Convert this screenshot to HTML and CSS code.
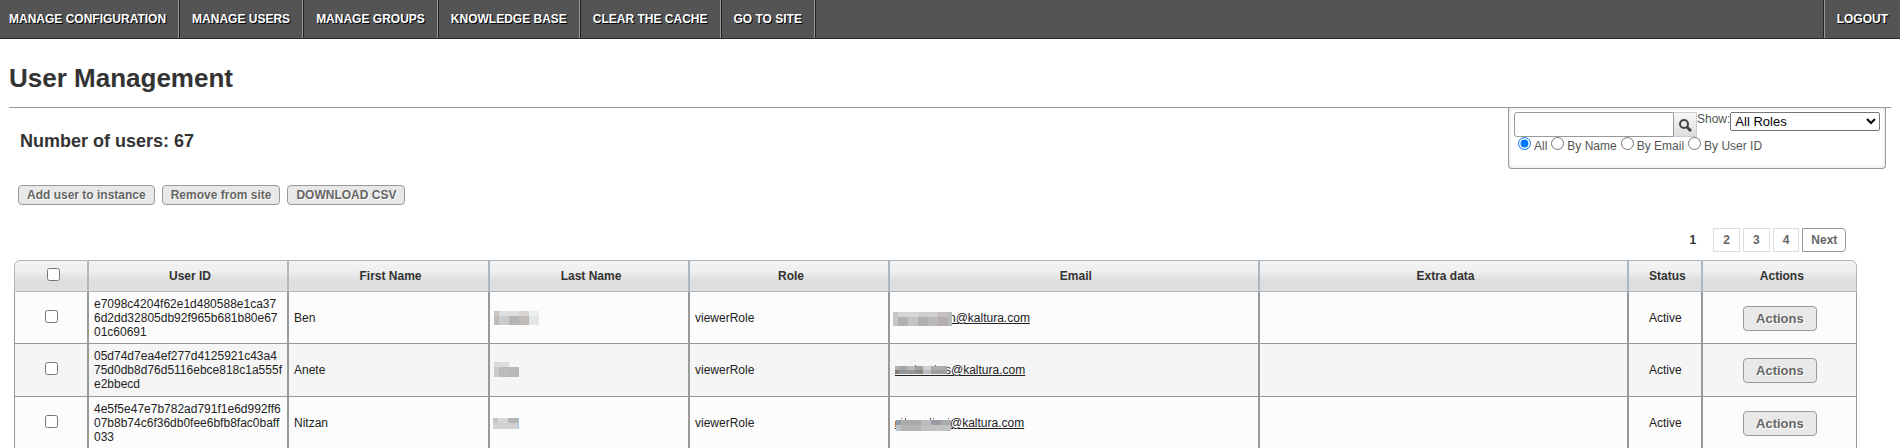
FILE: index.html
```html
<!DOCTYPE html>
<html lang="en">
<head>
    <meta charset="UTF-8">
    <meta name="viewport" content="width=device-width, initial-scale=1.0">
    <title>User Management</title>
    <link rel="stylesheet" href="styles.css">
</head>
<body>
    <nav class="navbar">
        <a href="#">Manage Configuration</a>
        <a href="#">Manage Users</a>
        <a href="#">Manage Groups</a>
        <a href="#">Knowledge Base</a>
        <a href="#">Clear the Cache</a>
        <a href="#">Go to Site</a>
        <a href="#" class="logout">Logout</a>
    </nav>

    <main class="content">
        <h1>User Management</h1>

        <div class="top">
            <div class="summary">
                <h2>Number of users: 67</h2>
                <div class="toolbar">
                    <button type="button" class="button">Add user to instance</button>
                    <button type="button" class="button">Remove from site</button>
                    <button type="button" class="button">DOWNLOAD CSV</button>
                </div>
            </div>

            <form class="search-box" action="#">
                <div class="search-row">
                    <input type="text" class="search-input" name="q" aria-label="Search users">
                    <button type="submit" class="search-btn" aria-label="Search">
                        <svg width="13" height="13" viewBox="0 0 13 13" fill="none" stroke="#444">
                            <circle cx="5" cy="5" r="4" stroke-width="2"/>
                            <path d="M8 8 L12 12" stroke-width="3"/>
                        </svg>
                    </button>
                    <label for="role">Show:</label>
                    <select id="role" name="role">
                        <option>All Roles</option>
                        <option>viewerRole</option>
                    </select>
                </div>
                <div class="filter-row">
                    <input type="radio" name="by" id="byAll" checked><label for="byAll">All</label>
                    <input type="radio" name="by" id="byName"><label for="byName">By Name</label>
                    <input type="radio" name="by" id="byEmail"><label for="byEmail">By Email</label>
                    <input type="radio" name="by" id="byId"><label for="byId">By User ID</label>
                </div>
            </form>
        </div>

        <div class="list">
            <div class="pagination">
                <span class="current">1</span>
                <a href="#">2</a>
                <a href="#">3</a>
                <a href="#">4</a>
                <a href="#" class="next">Next</a>
            </div>

            <table class="users">
                <colgroup>
                    <col class="col-check">
                    <col class="col-id">
                    <col class="col-first">
                    <col class="col-last">
                    <col class="col-role">
                    <col>
                    <col>
                    <col class="col-status">
                    <col class="col-actions">
                </colgroup>
                <thead>
                    <tr>
                        <th><input type="checkbox" aria-label="Select all users"></th>
                        <th>User ID</th>
                        <th>First Name</th>
                        <th>Last Name</th>
                        <th>Role</th>
                        <th>Email</th>
                        <th>Extra data</th>
                        <th>Status</th>
                        <th>Actions</th>
                    </tr>
                </thead>
                <tbody>
                    <tr>
                        <td class="center"><input type="checkbox" aria-label="Select Ben"></td>
                        <td class="id">e7098c4204f62e1d480588e1ca376d2dd32805db92f965b681b80e6701c60691</td>
                        <td>Ben</td>
                        <td>
                            <svg class="hidden-text" width="46" height="14" shape-rendering="crispEdges">
                                <path fill="#c9c4c0" d="M-1 0h5v5h-5z"/><path fill="#dcdee0" d="M4 0h20v5h-20z"/>
                                <path fill="#d9d4d4" d="M24 0h10v5h-10z"/><path fill="#ebeff0" d="M34 0h10v5h-10z"/>
                                <path fill="#c1bbb7" d="M-1 5h5v9h-5z"/><path fill="#cbccce" d="M4 5h10v9h-10z"/>
                                <path fill="#b4b5b5" d="M14 5h10v9h-10z"/><path fill="#c0bab8" d="M24 5h10v9h-10z"/>
                                <path fill="#e3e7e8" d="M34 5h10v9h-10z"/>
                            </svg>
                        </td>
                        <td>viewerRole</td>
                        <td>
                            <a href="#"><svg class="hidden-text" width="54" height="14" shape-rendering="crispEdges">
                                <path fill="#c9c5c3" d="M-2 1h5v14h-5z"/><path fill="#d4d5d6" d="M3 1h20v5h-20z"/>
                                <path fill="#cecece" d="M23 1h20v5h-20z"/><path fill="#c4c0c0" d="M43 1h10v5h-10z"/>
                                <path fill="#b0b2b3" d="M3 6h10v9h-10z"/><path fill="#c5c5c6" d="M13 6h10v9h-10z"/>
                                <path fill="#b0b0b1" d="M23 6h10v9h-10z"/><path fill="#b9babb" d="M33 6h10v9h-10z"/>
                                <path fill="#b4aeae" d="M43 6h10v9h-10z"/><path fill="#b6bbbc" d="M53 1h4v14h-4z"/>
                            </svg>n@kaltura.com</a>
                        </td>
                        <td></td>
                        <td class="center">Active</td>
                        <td class="center"><button type="button" class="button action">Actions</button></td>
                    </tr>
                    <tr>
                        <td class="center"><input type="checkbox" aria-label="Select Anete"></td>
                        <td class="id">05d74d7ea4ef277d4125921c43a475d0db8d76d5116ebce818c1a555fe2bbecd</td>
                        <td>Anete</td>
                        <td>
                            <svg class="hidden-text" width="46" height="14" shape-rendering="crispEdges">
                                <path fill="#dcd9d7" d="M-1 -1h5v5h-5z"/><path fill="#dedee0" d="M4 -1h10v5h-10z"/>
                                <path fill="#cbcbcb" d="M-1 4h5v10h-5z"/><path fill="#bdbbb9" d="M4 4h10v10h-10z"/>
                                <path fill="#b7b9bb" d="M14 4h10v10h-10z"/>
                            </svg>
                        </td>
                        <td>viewerRole</td>
                        <td>
                            <a href="#"><svg class="hidden-text" width="50" height="14" shape-rendering="crispEdges">
                                <path fill="#b9b5aa" d="M0 3h4v4h-4z"/><path fill="#a5a4a9" d="M4 3h8v4h-8z"/>
                                <path fill="#b7babd" d="M12 3h8v4h-8z"/><path fill="#a49f9c" d="M20 3h8v4h-8z"/>
                                <path fill="#cfcfd5" d="M28 3h8v4h-8z"/><path fill="#aeabaa" d="M36 3h16v4h-16z"/>
                                <path fill="#857c78" d="M0 7h4v4h-4z"/><path fill="#959698" d="M4 7h16v4h-16z"/>
                                <path fill="#8b8886" d="M20 7h8v4h-8z"/><path fill="#bcbcc0" d="M28 7h8v4h-8z"/>
                                <path fill="#9d9c9f" d="M36 7h16v4h-16z"/><path fill="#222" d="M0 12h52v1h-52z"/>
                                <path fill="#456" d="M20 2h1v1h-1zM40 2h1v1h-1z"/>
                            </svg>s@kaltura.com</a>
                        </td>
                        <td></td>
                        <td class="center">Active</td>
                        <td class="center"><button type="button" class="button action">Actions</button></td>
                    </tr>
                    <tr>
                        <td class="center"><input type="checkbox" aria-label="Select Nitzan"></td>
                        <td class="id">4e5f5e47e7b782ad791f1e6d992ff607b8b74c6f36db0fee6bfb8fac0baff033</td>
                        <td>Nitzan</td>
                        <td>
                            <svg class="hidden-text" width="46" height="14" shape-rendering="crispEdges">
                                <path fill="#c6c6c6" d="M-2 2h5v5h-5z"/><path fill="#d9d8d8" d="M3 2h10v5h-10z"/>
                                <path fill="#b9b5b3" d="M13 2h10v5h-10z"/><path fill="#d2d0d1" d="M-2 7h25v6h-25z"/>
                                <path fill="#99c8f5" d="M23 2h1v11h-1z"/>
                            </svg>
                        </td>
                        <td>viewerRole</td>
                        <td>
                            <a href="#"><svg class="hidden-text" width="55" height="14" shape-rendering="crispEdges">
                                <path fill="#222" d="M0 12h55v1h-55z"/>
                                <path fill="#b47a3c" d="M0 5h1v6h-1z"/>
                                <path fill="#555" d="M6 2h1v1h-1zM10 2h1v2h-1zM35 2h1v2h-1zM38 2h1v1h-1zM53 2h1v1h-1z"/>
                                <path fill="#8e9bab" d="M1 4h5v5h-5z"/><path fill="#a9a9a6" d="M6 4h20v5h-20z"/>
                                <path fill="#bcbcbc" d="M26 4h10v5h-10z"/><path fill="#9c9ba5" d="M36 4h10v5h-10z"/>
                                <path fill="#aaaaa9" d="M46 4h10v5h-10z"/><path fill="#bcc0c4" d="M1 9h5v6h-5z"/>
                                <path fill="#b4b2b0" d="M6 9h20v6h-20z"/><path fill="#c0c0c1" d="M26 9h30v6h-30z"/>
                            </svg>@kaltura.com</a>
                        </td>
                        <td></td>
                        <td class="center">Active</td>
                        <td class="center"><button type="button" class="button action">Actions</button></td>
                    </tr>
                </tbody>
            </table>
        </div>
    </main>
</body>
</html>
```
FILE: styles.css
```css
body {
    font-family: Arial, "Liberation Sans", sans-serif;
    font-size: 12px;
    line-height: 14px;
    margin: 0;
    background: #fff;
    color: #222;
}

.navbar {
    display: flex;
    background: #545454;
    border-bottom: 1px solid #2d2829;
}

.navbar a {
    padding: 12px;
    border-left: 1px solid #222;
    border-right: 1px solid #999;
    color: #fff;
    font-weight: bold;
    text-transform: uppercase;
    text-decoration: none;
    text-shadow: 1px 1px 0 #000;
}

.navbar a:first-child {
    padding-left: 9px;
    border-left: none;
}

.navbar a:nth-last-child(2) {
    box-shadow: 1px 0 0 #222;
}

.navbar .logout {
    margin-left: auto;
    border-left: 1px solid #999;
    border-right: none;
    box-shadow: -1px 0 0 #222;
}

.content {
    padding: 0 9px;
}

h1 {
    margin: 0;
    padding: 24px 0 14px;
    font-size: 26px;
    line-height: 30px;
    color: #333;
    border-bottom: 1px solid #999;
}

.top {
    display: flex;
    justify-content: space-between;
    align-items: flex-start;
}

.summary {
    padding: 23px 0 0 9px;
}

h2 {
    margin: 0 0 34px 2px;
    font-size: 18px;
    line-height: 20px;
    color: #333;
}

.toolbar {
    display: flex;
    gap: 7px;
}

.button {
    height: 20px;
    padding: 0 8px;
    font: bold 12px Arial, "Liberation Sans", sans-serif;
    color: #666;
    text-shadow: 1px 1px 0 #fff;
    background: #e8e8e8;
    border: 1px solid #999;
    border-radius: 4px;
    cursor: pointer;
}

.button:hover {
    background: #ddd;
}

.button.action {
    height: 25px;
    padding: 0 12px;
    font-size: 13px;
}

.search-box {
    box-sizing: border-box;
    width: 378px;
    height: 61px;
    margin-right: 5px;
    padding: 4px 5px;
    color: #555;
    border: 1px solid #999;
    border-top: none;
    border-radius: 0 0 4px 4px;
    box-shadow: inset 0 0 4px #ddd;
}

.search-row {
    display: flex;
    align-items: flex-start;
}

.search-input {
    box-sizing: border-box;
    width: 160px;
    height: 25px;
    border: 1px solid #999;
    border-radius: 3px 0 0 3px;
}

.search-btn {
    display: flex;
    align-items: center;
    justify-content: center;
    width: 23px;
    height: 25px;
    padding: 2px 0 0;
    background: linear-gradient(#f8f8f8, #ddd);
    border: 1px solid #ccc;
    border-left: none;
}

select {
    flex: 1;
    height: 19px;
    font: 13px Arial, "Liberation Sans", sans-serif;
}

.filter-row {
    display: flex;
    align-items: flex-start;
}

.filter-row input {
    width: 13px;
    height: 13px;
    margin: 0 3px 0 4px;
}

.filter-row label {
    padding-top: 2px;
}

.list {
    width: calc(98% - 1px);
    margin-left: 5px;
}

.pagination {
    display: flex;
    justify-content: flex-end;
    gap: 3px;
    padding: 23px 11px 8px 0;
    font-weight: bold;
}

.pagination a,
.pagination .current {
    padding: 4px 9px;
    color: #666;
    text-decoration: none;
    border: 1px solid #ddd;
}

.pagination .current {
    margin-right: 4px;
    color: #333;
    border-color: transparent;
}

.pagination .next {
    padding: 4px 8px;
    border-color: #999;
    border-radius: 0 4px 4px 0;
}

.users {
    width: 100%;
    table-layout: fixed;
    border-collapse: separate;
    border-spacing: 0;
}

.col-check,
.col-status {
    width: 74px;
}

.col-id,
.col-last,
.col-role {
    width: 200px;
}

.col-first {
    width: 201px;
}

.col-actions {
    width: 155px;
}

.users th {
    height: 30px;
    padding: 0 0 0 4px;
    color: #333;
    background: linear-gradient(#f3f3f3, #efefef 35%, #dedede 65%, #dfdfdf);
    border: 1px solid #abb7c1;
}

.users th:first-child {
    border-top-left-radius: 6px;
}

.users th:last-child {
    border-top-right-radius: 6px;
}

.users td {
    padding: 5px;
    background: #fcfcfc;
    border: 1px solid #999;
    border-top: none;
}

.users tbody tr:nth-child(even) td {
    background: #f5f5f5;
}

.users tbody tr:first-child td {
    padding-bottom: 4px;
}

.users .id {
    word-break: break-all;
}

.users .center {
    text-align: center;
}

.users input {
    margin: 0 0 3px;
    vertical-align: middle;
}

.users td a {
    color: #222;
}

/* pixelated stand-in for private names */
.hidden-text {
    position: relative;
    overflow: visible;
    vertical-align: top;
}
```
